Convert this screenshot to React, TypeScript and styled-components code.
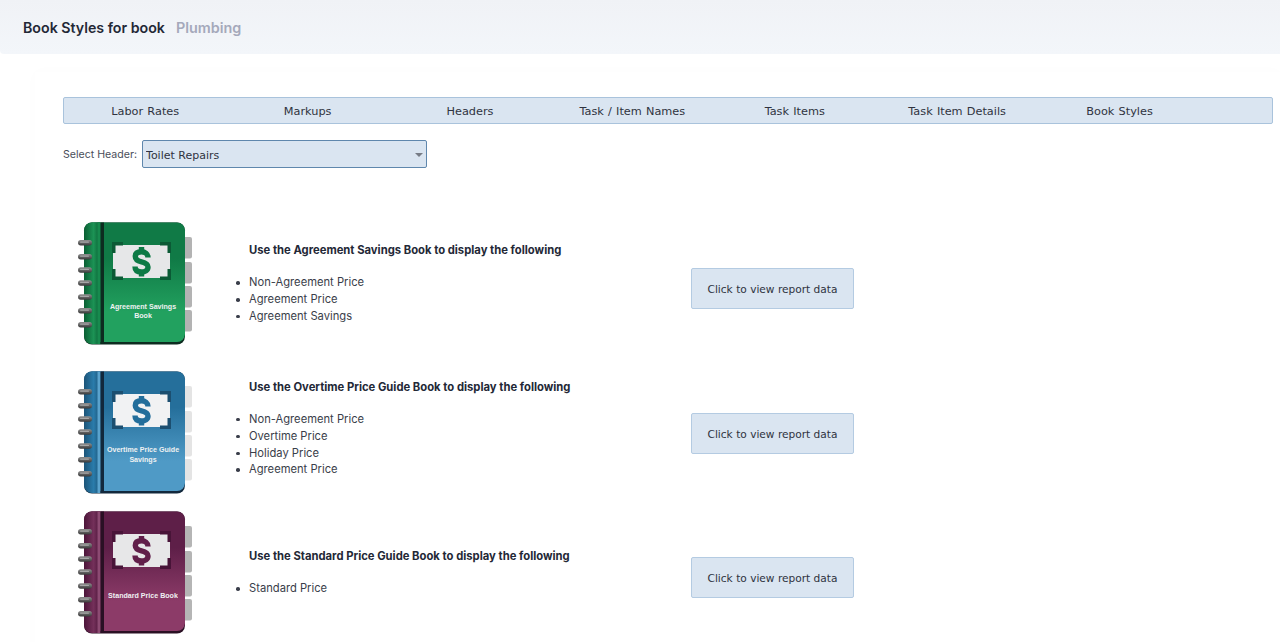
import React from "react";
import styled, { createGlobalStyle } from "styled-components";

const Global = createGlobalStyle`
  html, body { margin: 0; padding: 0; background: #fff; }
  body { font-family: Inter, "Liberation Sans", sans-serif; color: #232733; overflow: hidden; }
  #root { width: 1280px; height: 642px; overflow: hidden; }
`;

const Page = styled.div`
  width: 1280px;
  height: 642px;
  overflow: hidden;
`;

const Header = styled.header`
  height: 54px;
  display: flex;
  align-items: center;
  gap: 11px;
  padding: 2px 0 0 23px;
  box-sizing: border-box;
  background: linear-gradient(180deg, #f0f2f6 0%, #f3f6fa 100%);
  border-bottom-left-radius: 4px;
`;

const Title = styled.h1`
  margin: 0;
  font-size: 14.2px;
  line-height: 18px;
  font-weight: 600;
  color: #232836;
`;

const BookName = styled.span`
  font-size: 14.4px;
  line-height: 18px;
  font-weight: 600;
  color: #a5a9bb;
`;

const Content = styled.main`
  margin: 18px 0 0 35px;
  padding: 25px 7px 0 28px;
  height: 600px;
  box-shadow: 0 0 14px rgba(40, 50, 80, 0.016);
`;

const TabBar = styled.nav`
  height: 27px;
  box-sizing: border-box;
  display: flex;
  background: #dae5f1;
  border: 1px solid #a9c3dc;
  border-radius: 2px;
`;

const Tab = styled.a`
  width: 162.4px;
  flex: none;
  text-align: center;
  font-family: "DejaVu Sans", Verdana, sans-serif;
  font-size: 11.3px;
  word-spacing: 0.6px;
  line-height: 27px;
  color: #2f3340;
`;

const FilterRow = styled.div`
  display: flex;
  align-items: center;
  gap: 5px;
  margin-top: 16px;
`;

const FilterLabel = styled.label`
  font-size: 10.6px;
  line-height: 14px;
  padding-top: 2px;
  color: #4a4e5a;
`;

const SelectWrap = styled.div`
  position: relative;
  width: 285px;
  height: 28px;
`;

const Select = styled.select`
  appearance: none;
  width: 100%;
  height: 100%;
  box-sizing: border-box;
  padding: 2px 0 0 3px;
  background: #dae5f1;
  border: 1px solid #5f87ad;
  border-radius: 2px;
  font-family: "DejaVu Sans", Verdana, sans-serif;
  font-size: 11px;
  color: #2f3340;
`;

const Caret = styled.span`
  position: absolute;
  right: 4px;
  top: 13px;
  width: 0;
  height: 0;
  border-left: 4px solid transparent;
  border-right: 4px solid transparent;
  border-top: 4px solid #777c86;
  pointer-events: none;
`;

const Rows = styled.div`
  margin-top: 54px;
  width: 800px;
`;

const Row = styled.section<{ $gap: number }>`
  display: flex;
  align-items: center;
  height: 123px;
  margin-bottom: ${(p) => p.$gap}px;
`;

const Details = styled.div<{ $lift: number }>`
  display: flex;
  align-items: center;
  margin-bottom: ${(p) => p.$lift}px;
`;

const BookArt = styled.svg`
  display: block;
  width: 114px;
  height: 123px;
  margin-left: 15px;
  flex: none;
`;

const Info = styled.div`
  width: 442px;
  margin-left: 57px;
  flex: none;
`;

const InfoTitle = styled.h3`
  margin: 0 0 16px;
  font-size: 11.25px;
  line-height: 16px;
  font-weight: 700;
  color: #232836;
`;

const List = styled.ul`
  margin: 0;
  padding: 0;
  list-style: none;
`;

const Item = styled.li`
  position: relative;
  font-size: 11.2px;
  line-height: 16.8px;
  color: #3a3e4a;

  &::before {
    content: "";
    position: absolute;
    left: -13px;
    top: 7px;
    width: 3.5px;
    height: 3.5px;
    border-radius: 50%;
    background: #3a3e4a;
  }
`;

const ReportButton = styled.button`
  width: 163px;
  height: 41px;
  margin-top: 10px;
  flex: none;
  box-sizing: border-box;
  background: #dae5f1;
  border: 1px solid #b4cbe2;
  border-radius: 2px;
  font-family: "DejaVu Sans", Verdana, sans-serif;
  font-size: 10.6px;
  color: #2f3340;
  padding: 1px 0 0;
`;

type Palette = {
  id: string;
  top: string;
  bottom: string;
  spineDark: string;
  spineMid: string;
  stripe: string;
  edge: string;
  note: string;
  tab: string;
  ink: string;
  bracket: string;
  labelY: number[];
  label: string[];
};

const RingYs = [20.7, 34.7, 48, 61, 75, 88.7, 102.7];
const TabYs = [15, 40, 64, 88];

function Book({ p }: { p: Palette }) {
  return (
    <BookArt viewBox="0 0 114 123">
      <defs>
        <linearGradient id={`${p.id}-c`} x1="0" y1="0" x2="0" y2="1">
          <stop offset="0" stopColor={p.top} />
          <stop offset="0.3" stopColor={p.top} />
          <stop offset="0.75" stopColor={p.bottom} />
          <stop offset="1" stopColor={p.bottom} />
        </linearGradient>
        <linearGradient id={`${p.id}-s`} x1="0" y1="0" x2="1" y2="0">
          <stop offset="0" stopColor={p.spineDark} />
          <stop offset="0.6" stopColor={p.spineMid} />
          <stop offset="1" stopColor={p.spineDark} />
        </linearGradient>
        <linearGradient id={`${p.id}-r`} x1="0" y1="0" x2="0" y2="1">
          <stop offset="0" stopColor="#8f8f8f" />
          <stop offset="0.45" stopColor="#6a6a6a" />
          <stop offset="1" stopColor="#3a3a3a" />
        </linearGradient>
      </defs>
      {TabYs.map((y) => (
        <rect key={y} x="102" y={y} width="12" height="21.5" rx="2" fill={p.tab} />
      ))}
      <rect x="6" y="0.5" width="101" height="122" rx="8" fill={p.edge} />
      <path d="M14 0.5H99a8 8 0 0 1 8 8V112a8 8 0 0 1-8 8H14a8 8 0 0 1-8-8V8.5a8 8 0 0 1 8-8Z" fill={`url(#${p.id}-c)`} />
      <path d="M14 0.5H22V122H14a8 8 0 0 1-8-8V8.5a8 8 0 0 1 8-8Z" fill={`url(#${p.id}-s)`} />
      <rect x="19.5" y="0.5" width="3" height="121.5" fill={p.stripe} />
      <rect x="22.5" y="0.5" width="3.5" height="121.5" fill={p.edge} />
      {RingYs.map((y) => (
        <g key={y}>
          <rect x="0" y={y - 2.7} width="14" height="5.4" rx="2.7" fill={`url(#${p.id}-r)`} />
          <rect x="2" y={y - 1.2} width="9" height="1.2" rx="0.6" fill="#b9b9b9" opacity="0.75" />
        </g>
      ))}
      <rect x="35" y="23" width="57" height="33" fill={p.note} />
      <path d="M34 20H45V23.500H37.500V31H34ZM82 20H93V31H89.500V23.500H82ZM34 47H37.500V54.500H45V58H34ZM89.500 47H93V58H82V54.500H89.500Z" fill={p.bracket} />
      <g fill="none" stroke={p.ink} strokeWidth="5.4">
        <path d="M70 35.500C70 31.800 67 29.800 63.500 29.800C59.500 29.800 57.300 31.500 57.300 34.500C57.300 38 60 39 63.500 39.800C67 40.600 70 41.800 70 45C70 48.500 67 50 63.500 50C59.500 50 57 48.500 57 44.500" />
        <path d="M63.500 25V31M63.500 49V54.500" />
      </g>
      <g opacity="0.99">
        {p.label.map((t, i) => (
          <text key={t} x="65" y={p.labelY[i]} textAnchor="middle" fontFamily="'Liberation Sans', sans-serif" fontSize="7.1" fontWeight="700" fill="#f1f3f4">
            {t}
          </text>
        ))}
      </g>
    </BookArt>
  );
}

const green: Palette = {
  id: "g", top: "#107a46", bottom: "#22a15f", spineDark: "#0a5e33", spineMid: "#1c9355", stripe: "#178a4e", edge: "#0d2c20", note: "#e6e7e8", tab: "#b3b3b3", ink: "#0d7a45", bracket: "#0b5a35",
  label: ["Agreement Savings", "Book"], labelY: [87, 96],
};
const blue: Palette = {
  id: "b", top: "#256f9b", bottom: "#4f9ac6", spineDark: "#1c5478", spineMid: "#2a7cab", stripe: "#5aa3cd", edge: "#12283c", note: "#f1f2f3", tab: "#e4e4e4", ink: "#236e9b", bracket: "#1c4f70",
  label: ["Overtime Price Guide", "Savings"], labelY: [81, 90.500],
};
const plum: Palette = {
  id: "p", top: "#5e1f48", bottom: "#8c3b68", spineDark: "#4c1539", spineMid: "#74305a", stripe: "#8c4a72", edge: "#2a1024", note: "#e7e7e8", tab: "#b5b5b5", ink: "#611f4a", bracket: "#481438",
  label: ["Standard Price Book"], labelY: [87],
};

const tabs = ["Labor Rates", "Markups", "Headers", "Task / Item Names", "Task Items", "Task Item Details", "Book Styles"];

const books = [
  { p: green, gap: 26, lift: 0, title: "Use the Agreement Savings Book to display the following", items: ["Non-Agreement Price", "Agreement Price", "Agreement Savings"] },
  { p: blue, gap: 17, lift: 8, title: "Use the Overtime Price Guide Book to display the following", items: ["Non-Agreement Price", "Overtime Price", "Holiday Price", "Agreement Price"] },
  { p: plum, gap: 0, lift: 0, title: "Use the Standard Price Guide Book to display the following", items: ["Standard Price"] },
];

export default function App() {
  return (
    <Page>
      <Global />
      <Header>
        <Title>Book Styles for book</Title>
        <BookName>Plumbing</BookName>
      </Header>
      <Content>
        <TabBar>
          {tabs.map((t) => (
            <Tab key={t}>{t}</Tab>
          ))}
        </TabBar>
        <FilterRow>
          <FilterLabel>Select Header:</FilterLabel>
          <SelectWrap>
            <Select defaultValue="Toilet Repairs">
              <option>Toilet Repairs</option>
            </Select>
            <Caret />
          </SelectWrap>
        </FilterRow>
        <Rows>
          {books.map((b) => (
            <Row key={b.p.id} $gap={b.gap}>
              <Book p={b.p} />
              <Details $lift={b.lift}>
                <Info>
                  <InfoTitle>{b.title}</InfoTitle>
                  <List>
                    {b.items.map((i) => (
                      <Item key={i}>{i}</Item>
                    ))}
                  </List>
                </Info>
                <ReportButton>Click to view report data</ReportButton>
              </Details>
            </Row>
          ))}
        </Rows>
      </Content>
    </Page>
  );
}
